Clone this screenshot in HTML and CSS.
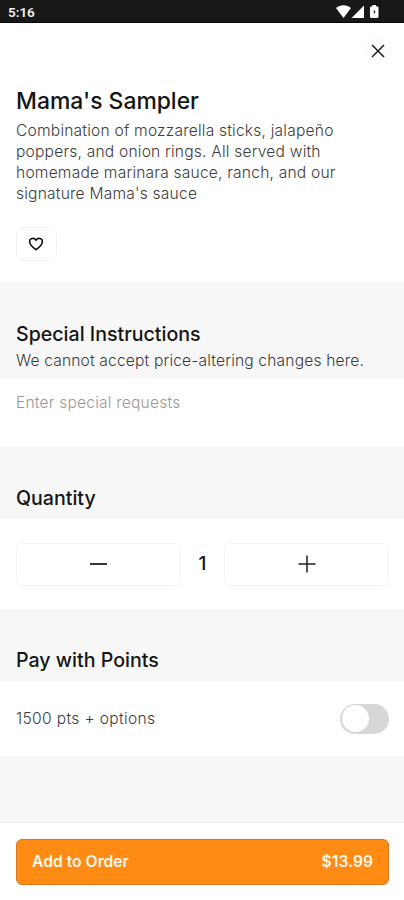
FILE: index.html
```
<!DOCTYPE html>
<html lang="en">
<head>
<meta charset="utf-8">
<meta name="viewport" content="width=device-width, initial-scale=1">
<title>Mama's Sampler</title>
<link rel="stylesheet" href="styles.css">
</head>
<body>
<div class="status-bar">
  <span class="clock">5:16</span>
  <svg class="status-icons" width="44" height="14" viewBox="0 0 44 14" fill="#fff">
    <path d="M0 3C4.300-.7 10.700-.7 15 3L7.500 13z"/>
    <path d="M28 .5V13H15.500z"/>
    <path fill-rule="evenodd" d="M36.500 0h3.500v1.200h1q1.500 0 1.500 1.500v8.800q0 1.500-1.500 1.500h-5.500q-1.500 0-1.500-1.500V2.700q0-1.500 1.500-1.500h1zM38.600 4.500l-1.500 2.700h1v2l1.500-2.700h-1z"/>
  </svg>
</div>
<main class="page">
  <section class="product">
    <button class="close" aria-label="Close"><svg width="14" height="14" viewBox="0 0 14 14" fill="none" stroke="#1e1e1e" stroke-width="1.500"><path d="M1 1l12 12M13 1L1 13"/></svg></button>
    <h1 class="title">Mama's Sampler</h1>
    <p class="description">Combination of mozzarella sticks, jalapeño<br>poppers, and onion rings. All served with<br>homemade marinara sauce, ranch, and our<br>signature Mama's sauce</p>
    <button class="favorite" aria-label="Favorite"><svg width="16" height="14" viewBox="0 0 16 14" fill="none" stroke="#111" stroke-width="1.600" stroke-linejoin="miter"><path d="M8 12.800C4.500 10 1.600 7.700 1.600 4.700C1.600 1 6.200.2 8 3.200C9.800.2 14.400 1 14.400 4.700C14.400 7.700 11.500 10 8 12.800z"/></svg></button>
  </section>
  <header class="section-head instructions-head">
    <h2 class="heading">Special Instructions</h2>
    <p class="hint">We cannot accept price-altering changes here.</p>
  </header>
  <div class="request"><span class="placeholder">Enter special requests</span></div>
  <header class="section-head"><h2 class="heading">Quantity</h2></header>
  <div class="stepper">
    <button class="step" aria-label="Decrease"><svg width="18" height="18" viewBox="0 0 18 18" stroke="#222" stroke-width="1.800"><path d="M0 9h17"/></svg></button>
    <span class="count">1</span>
    <button class="step" aria-label="Increase"><svg width="18" height="18" viewBox="0 0 18 18" stroke="#222" stroke-width="1.500"><path d="M.5 9h17M9 .5v17"/></svg></button>
  </div>
  <header class="section-head"><h2 class="heading">Pay with Points</h2></header>
  <div class="points"><span class="points-label">1500 pts + options</span><span class="toggle"><span class="knob"></span></span></div>
</main>
<footer class="footer">
  <button class="order"><span class="order-label">Add to Order</span><span class="price">$13.99</span></button>
</footer>
</body>
</html>
```
FILE: styles.css
```
* { box-sizing: border-box; }
body { margin: 0; height: 900px; display: flex; flex-direction: column; overflow: hidden; background: #f7f7f7; font-family: Inter, "Liberation Sans", sans-serif; color: #151515; }
h1, h2, p { margin: 0; white-space: nowrap; }
button { padding: 0; font: inherit; }
svg { display: block; }
.status-bar { height: 23px; display: flex; align-items: center; justify-content: space-between; padding: 2px 24px 0 8px; background: #181818; border-bottom: 1px solid #050505; }
.clock { font: 600 13.5px/16px Roboto, sans-serif; color: #f2f2f2; }
.page { flex: 1; }
.product { height: 259px; padding: 14px 16px 0; background: #fff; display: flex; flex-direction: column; align-items: flex-start; }
.close { width: 28px; height: 28px; margin-right: -4px; align-self: flex-end; display: grid; place-items: center; border: 0; border-radius: 50%; background: #fcfcfc; }
.title { margin-top: 21px; font-size: 22.9px; line-height: 30px; font-weight: 500; }
.description { margin-top: 4px; font-size: 15.6px; letter-spacing: .2px; line-height: 21px; font-weight: 300; color: #3c3c3c; }
.favorite { margin-top: 23px; width: 41px; height: 34px; margin-left: -.5px; display: grid; place-items: center; border: 1px solid #f2f2f2; border-radius: 7px; background: #fff; }
.section-head { height: 72px; padding: 39px 16px 0; background: #f7f7f7; }
.instructions-head { height: 97px; padding-top: 40px; }
.heading { font-size: 19.6px; line-height: 24px; font-weight: 500; }
.hint { margin-top: 5px; font-size: 15.6px; letter-spacing: .16px; line-height: 20px; font-weight: 300; color: #3c3c3c; }
.request { height: 68px; padding: 14px 16px; background: #fff; }
.placeholder { display: block; font-size: 15.6px; letter-spacing: .2px; line-height: 20px; font-weight: 300; color: #999; }
.stepper { height: 90px; padding: 0 15px 0 16px; display: grid; grid-template-columns: 165px 1fr 165px; align-items: center; background: #fff; }
.step { height: 43px; display: grid; place-items: center; border: 1px solid #f3f3f3; border-radius: 6px; background: #fff; }
.count { text-align: center; font-size: 19px; line-height: 22px; font-weight: 500; }
.points { height: 75px; padding: 0 15px 0 16px; display: flex; align-items: center; justify-content: space-between; background: #fff; }
.points-label { font-size: 15.6px; font-weight: 300; letter-spacing: .34px; color: #3c3c3c; }
.toggle { width: 49px; height: 30px; padding: 1.5px; border-radius: 15px; background: #d7d7d7; }
.knob { display: block; width: 27px; height: 27px; border-radius: 50%; background: #fff; }
.footer { height: 78px; padding: 16px 15px 0 16px; background: #fff; border-top: 1px solid #eee; }
.order { width: 100%; height: 46px; padding: 0 15px 2px; display: flex; align-items: center; justify-content: space-between; border: 1px solid #db761a; border-radius: 6px; background: #ff8b14; color: #fff8ed; font-size: 15.7px; font-weight: 600; }
```
